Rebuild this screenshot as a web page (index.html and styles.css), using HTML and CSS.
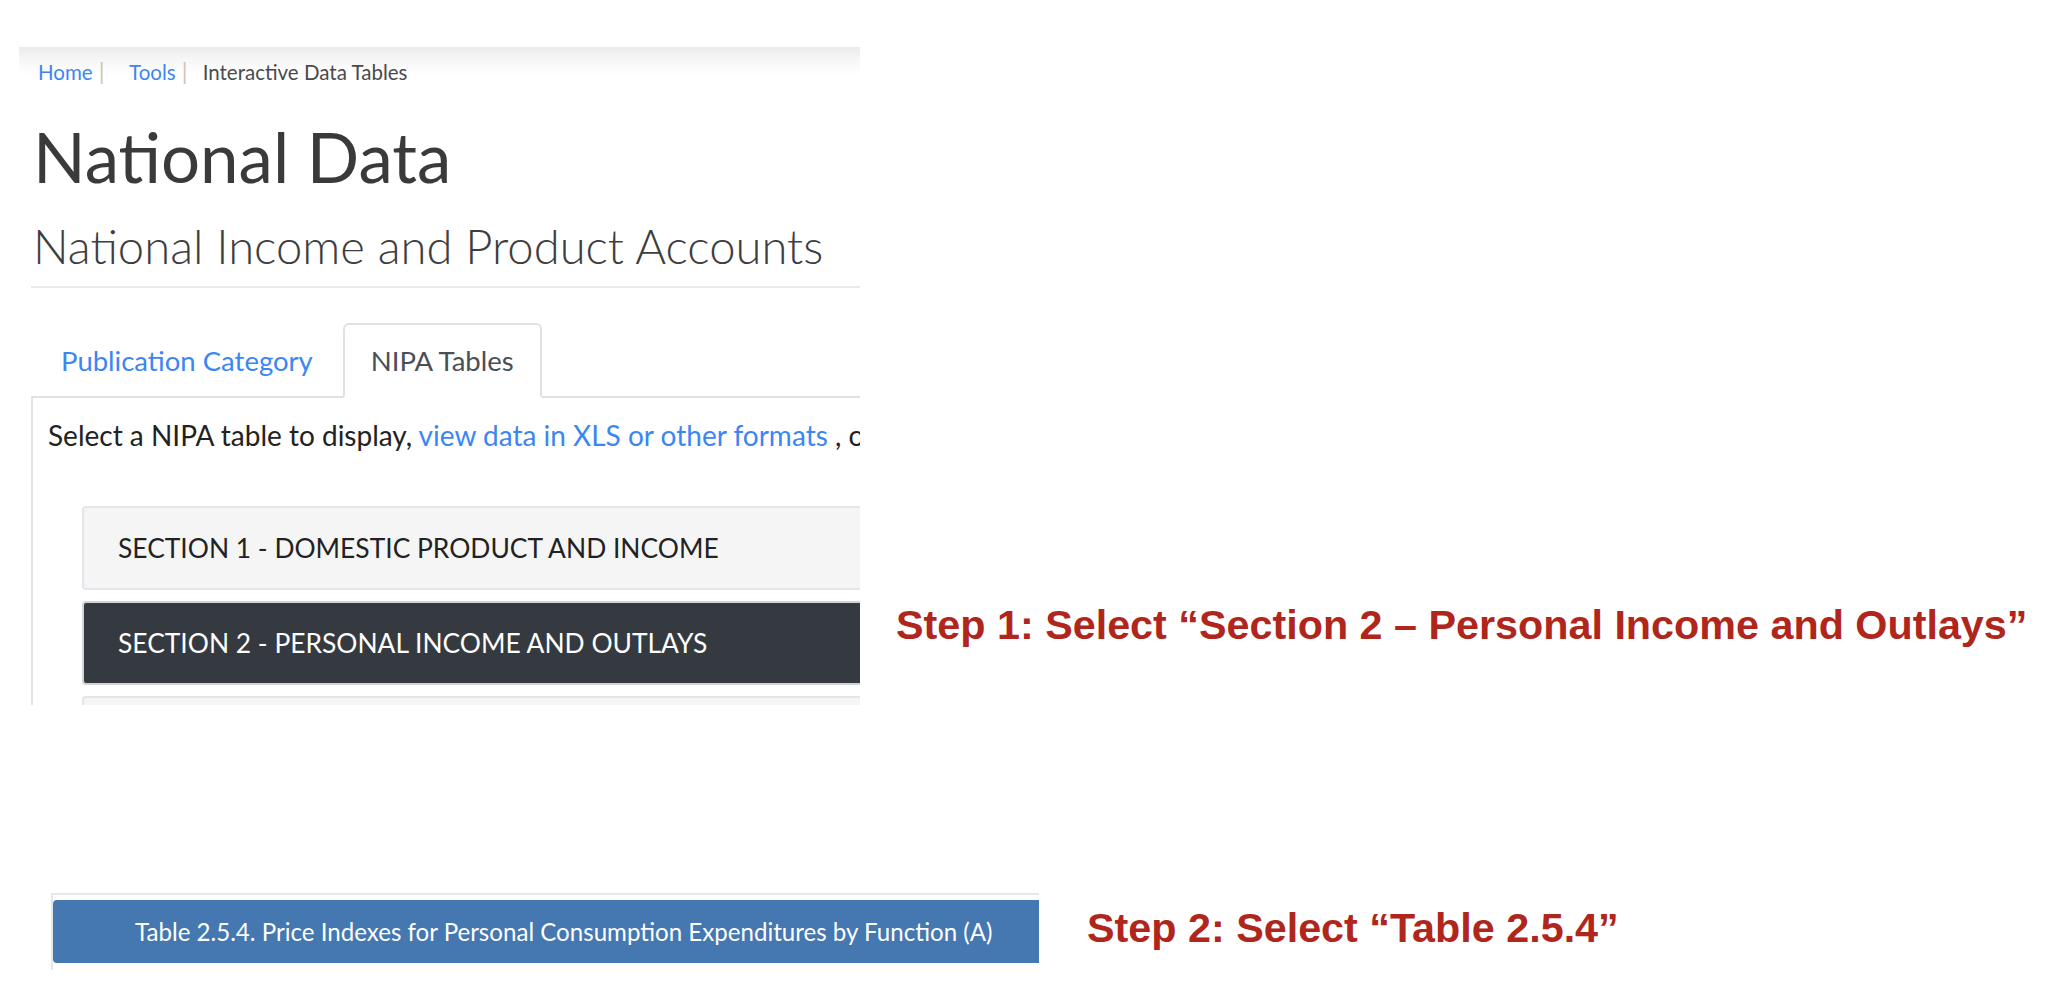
FILE: index.html
```html
<!DOCTYPE html>
<html lang="en">
<head>
<meta charset="utf-8">
<title>National Data – NIPA table selection</title>
<link rel="stylesheet" href="styles.css">
</head>
<body>
<main class="slide">
  <section class="row row-one">
    <div class="shot">
      <div class="crumbs">
        <a class="crumb-link" href="#">Home</a><span class="sep sep-first">|</span>
        <a class="crumb-link" href="#">Tools</a><span class="sep">|</span>
        <span class="crumb-here">Interactive Data Tables</span>
      </div>
      <div class="page">
        <h1 class="title">National Data</h1>
        <h2 class="subtitle">National Income and Product Accounts</h2>
        <hr class="rule">
        <nav class="tabs">
          <a class="tab" href="#">Publication Category</a>
          <a class="tab tab-active" href="#">NIPA Tables</a>
        </nav>
        <div class="panel">
          <p class="intro">Select a NIPA table to display, <a class="inline-link" href="#">view data in XLS or other formats</a> , or</p>
          <ul class="sections">
            <li class="sec">SECTION 1 - DOMESTIC PRODUCT AND INCOME</li>
            <li class="sec sec-dark">SECTION 2 - PERSONAL INCOME AND OUTLAYS</li>
            <li class="sec">SECTION 3 - GOVERNMENT CURRENT RECEIPTS AND EXPENDITURES</li>
          </ul>
        </div>
      </div>
    </div>
    <p class="step step-one">Step 1: Select “Section 2 – Personal Income and Outlays”</p>
  </section>

  <section class="row row-two">
    <div class="shot-bar">
      <div class="table-bar">Table 2.5.4. Price Indexes for Personal Consumption Expenditures by Function (A)</div>
    </div>
    <p class="step step-two">Step 2: Select “Table 2.5.4”</p>
  </section>
</main>
</body>
</html>
```

FILE: styles.css
```css
html, body {
  margin: 0;
  padding: 0;
  background: #ffffff;
}

.slide {
  padding-top: 47px;
}

.row {
  display: flex;
  align-items: flex-start;
}

/* ---- first cut-out: the National Data page ---- */
.row-one {
  padding-left: 19px;
}

.shot {
  width: 841px;
  height: 658px;
  overflow: hidden;
  font-family: Lato, "Open Sans", sans-serif;
  white-space: nowrap;
  flex: none;
}

.crumbs {
  background: linear-gradient(to bottom, #ebebeb 0, #f6f6f6 12px, #ffffff 28px);
  padding: 9px 0 0 19px;
  line-height: 30px;
  height: 29px;
  font-size: 20.5px;
  color: #444;
}

.crumb-link {
  color: #3c86f3;
  text-decoration: none;
}

.sep {
  display: inline-block;
  color: #cdc6bb;
  font-size: 23px;
  margin: 0 10px 0 6px;
}

.sep-first {
  margin-right: 20px;
}

.crumb-here {
  color: #4a4a4a;
}

.page {
  padding-left: 12px;
}

.title {
  margin: 32px 0 0 2px;
  font-size: 69px;
  line-height: 80px;
  font-weight: 400;
  color: #3a3a3a;
}

.subtitle {
  margin: 21px 0 0 2px;
  font-size: 47.2px;
  line-height: 56px;
  font-weight: 300;
  color: #3e3e3e;
}

.rule {
  margin: 12px 0 0 0;
  border: 0;
  border-top: 2px solid #e9e9e9;
}

.tabs {
  margin-top: 35px;
  display: flex;
  border-bottom: 2px solid #dee2e6;
}

.tab {
  height: 75px;
  box-sizing: border-box;
  margin-bottom: -2px;
  padding: 0 28px;
  display: flex;
  align-items: center;
  border: 2px solid transparent;
  border-radius: 6px 6px 0 0;
  font-size: 27.5px;
  color: #3c86f3;
  text-decoration: none;
}

.tab-active {
  color: #495057;
  background: #ffffff;
  border-color: #dee2e6 #dee2e6 #ffffff;
  padding: 0 26px;
}

.panel {
  border-left: 2px solid #e1e4e8;
  padding: 19px 0 0 15px;
}

.intro {
  margin: 0;
  font-size: 28px;
  line-height: 36px;
  color: #222;
}

.inline-link {
  color: #3c86f3;
  text-decoration: none;
}

.sections {
  list-style: none;
  margin: 53px 0 0 34px;
  padding: 0;
  width: 1000px;
  display: flex;
  flex-direction: column;
  gap: 11px;
}

.sec {
  height: 84px;
  box-sizing: border-box;
  display: flex;
  align-items: center;
  padding-left: 34px;
  border: 2px solid #e2e5e9;
  border-radius: 4px;
  background: #f5f5f5;
  font-size: 26.4px;
  color: #222;
}

.sec-dark {
  background: #343a40;
  border-color: #d2d5d8;
  color: #ffffff;
}

/* ---- second cut-out: table row ---- */
.row-two {
  margin-top: 188px;
  padding-left: 51px;
}

.shot-bar {
  width: 986px;
  flex: none;
  border-top: 2px solid #e4e7eb;
  border-left: 2px solid #e4e7eb;
  padding: 5px 0 7px 0;
}

.table-bar {
  height: 63px;
  box-sizing: border-box;
  display: flex;
  align-items: center;
  padding-left: 82px;
  background: #4577b0;
  border-radius: 4px 0 0 4px;
  font-family: Lato, "Open Sans", sans-serif;
  font-size: 24.1px;
  color: #ffffff;
  white-space: nowrap;
  overflow: hidden;
}

/* ---- red step annotations ---- */
.step {
  margin: 0;
  font-family: "Liberation Sans", Arial, sans-serif;
  font-weight: 700;
  font-size: 41.3px;
  line-height: 48px;
  color: #b0261c;
  white-space: nowrap;
}

.step-one {
  margin: 554px 0 0 36px;
}

.step-two {
  margin: 11px 0 0 48px;
}
```
